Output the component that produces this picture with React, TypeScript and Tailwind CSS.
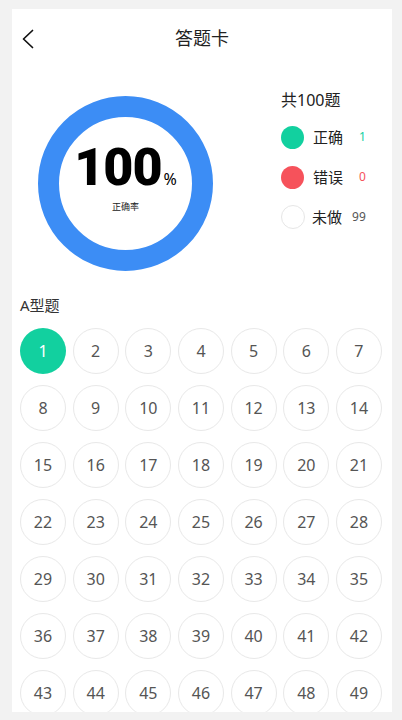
import React from "react";

export default function App() {
  const nums = Array.from({ length: 100 }, (_, i) => i + 1);
  return (
    <div
      className="w-[402px] h-[720px] bg-[#f2f2f2] pt-[9px] pl-[12px] overflow-hidden"
      style={{ fontFamily: '"Noto Sans", "Noto Sans CJK SC", sans-serif' }}
    >
      <div className="bg-white w-[380px] h-[703px] overflow-hidden">
        {/* Header */}
        <div className="relative h-[58px] flex items-center justify-center">
          <svg
            className="absolute left-[9px] top-[20px]"
            width="14"
            height="20"
            viewBox="0 0 14 20"
          >
            <polyline
              points="11.5,1.5 2.5,10 11.5,18.5"
              fill="none"
              stroke="#111"
              strokeWidth="1.7"
              strokeLinecap="round"
              strokeLinejoin="round"
            />
          </svg>
          <span className="text-[18px] text-[#222] leading-none">答题卡</span>
        </div>

        {/* Stats */}
        <div className="flex items-start">
          <div className="ml-[26px] mt-[29px] w-[175px] h-[175px] rounded-full border-[21px] border-[#3c8df5] flex flex-col items-center justify-center">
            <div className="flex items-baseline mt-[-14px]">
              <span
                className="text-[52px] font-black leading-none text-black tracking-[-1px]"
                style={{ fontFamily: 'Roboto, "Noto Sans", sans-serif' }}
              >
                100
              </span>
              <span className="text-[16px] text-black ml-[2px] leading-none">%</span>
            </div>
            <span className="text-[9px] text-[#222] mt-[8px] leading-none">正确率</span>
          </div>
          <div className="ml-[68px] mt-[22px] flex flex-col">
            <span className="text-[16px] leading-[22px] text-[#222]">共100题</span>
            <div className="mt-[6px] flex flex-col">
              <div className="h-[40px] flex items-center">
                <div className="w-[23px] h-[23px] rounded-full bg-[#12d09f]" />
                <span className="ml-[9px] text-[15px] text-[#222]">正确</span>
                <span className="ml-[16px] text-[12px] text-[#12d09f]">1</span>
              </div>
              <div className="h-[40px] flex items-center">
                <div className="w-[23px] h-[23px] rounded-full bg-[#f6525b]" />
                <span className="ml-[9px] text-[15px] text-[#222]">错误</span>
                <span className="ml-[16px] text-[12px] text-[#f6525b]">0</span>
              </div>
              <div className="h-[40px] flex items-center">
                <div className="w-[24px] h-[24px] rounded-full border border-[#e6e6e6]" />
                <span className="ml-[7px] text-[15px] text-[#222]">未做</span>
                <span className="ml-[10px] text-[12px] text-[#555]">99</span>
              </div>
            </div>
          </div>
        </div>

        {/* Section */}
        <div className="pl-[8px] pr-[10px] mt-[23px]">
          <div className="text-[15px] leading-[22px] text-[#333]">A型题</div>
          <div className="mt-[12px] grid grid-cols-[repeat(7,46px)] justify-between gap-y-[11px]">
            {nums.map((n) =>
              n === 1 ? (
                <div
                  key={n}
                  className="w-[46px] h-[46px] rounded-full bg-[#12d09f] flex items-center justify-center text-[16px] text-white"
                >
                  {n}
                </div>
              ) : (
                <div
                  key={n}
                  className="w-[46px] h-[46px] rounded-full border border-[#e8e8e8] flex items-center justify-center text-[16px] text-[#555]"
                >
                  {n}
                </div>
              )
            )}
          </div>
        </div>
      </div>
    </div>
  );
}
